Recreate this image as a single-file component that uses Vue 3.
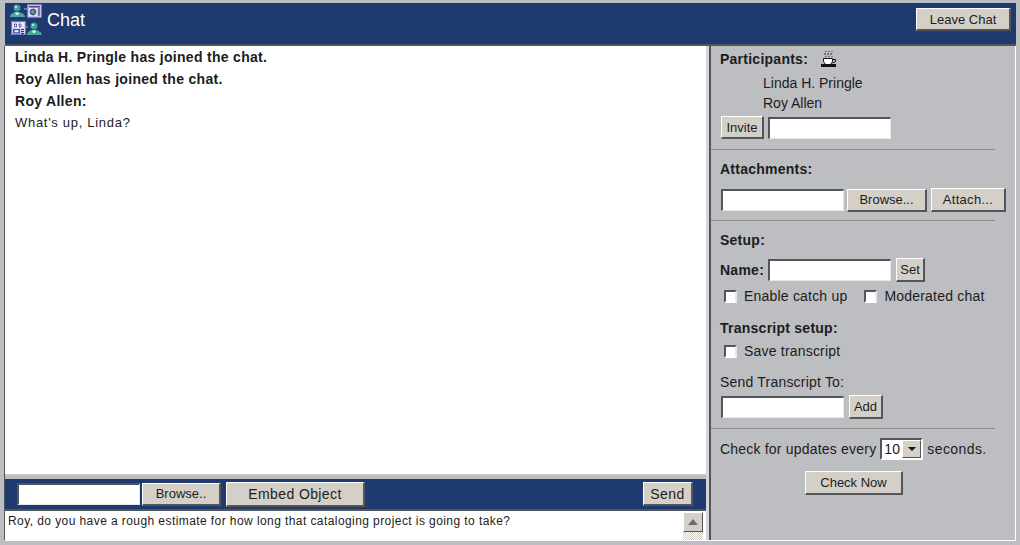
<template>
  <div class="frame">
    <header class="topbar">
      <div class="brand">
        <svg class="logo" width="34" height="34" viewBox="0 0 34 34">
          <rect x="17.500" y="0.500" width="14" height="13" fill="#c8c4e8" stroke="#7c78b8" />
          <rect x="19" y="2" width="11" height="1.500" fill="#484890" />
          <rect x="19" y="4" width="8" height="8" fill="#eef0f8" />
          <circle cx="23" cy="8" r="3.400" fill="#2a6cb0" />
          <path d="M21.500 6.500h3l-1 2.500h-2zM24 9l1.600-.6-.8 2.200z" fill="#d88a28" />
          <path d="M28 5h2M28 7h2M28 9h2M28 11h2" stroke="#303060" />
          <circle cx="7" cy="4" r="3.400" fill="#3ca0a0" />
          <circle cx="6" cy="3" r="1.300" fill="#a8e4e0" />
          <path d="M0 13c0-3 3-5 7-5s8 2 8 5z" fill="#48a8a0" />
          <path d="M5 8.500h4l-1 2.500H6z" fill="#d8f4f0" />
          <path d="M14 5h3" stroke="#a8b0d8" />
          <rect x="1.500" y="17.500" width="14" height="13" fill="#d4d0ee" stroke="#7c78b8" />
          <rect x="3" y="19" width="11" height="5" fill="#f4f4fc" />
          <path d="M4.500 20v3h2v-3zM9 20v3h2v-3z" fill="none" stroke="#404080" stroke-width=".8" />
          <rect x="3" y="25" width="7" height="4.500" fill="#3a58b8" />
          <rect x="4.500" y="26.200" width="4" height="2" fill="#f0f0f8" />
          <path d="M11 25.500h3M11 27.500h3M11 29.500h3" stroke="#303060" />
          <path d="M16 23h2" stroke="#a8b0d8" />
          <circle cx="24" cy="22" r="3.400" fill="#3ca0a0" />
          <circle cx="23" cy="21" r="1.300" fill="#a8e4e0" />
          <path d="M17 31c0-3 3-5 7-5s8 2 8 5z" fill="#48a8a0" />
          <path d="M22 26.500h4l-1 2.500h-2z" fill="#d8f4f0" />
        </svg>
        <span class="title">Chat</span>
      </div>
      <button class="btn leave">Leave Chat</button>
    </header>

    <div class="content">
      <main class="chat">
        <div class="log">
          <p class="strong">Linda H. Pringle has joined the chat.</p>
          <p class="strong">Roy Allen has joined the chat.</p>
          <p class="strong">Roy Allen:</p>
          <p class="said">What's up, Linda?</p>
        </div>
        <div class="composer-bar">
          <input class="field field-small" type="text" />
          <button class="btn browse-small">Browse..</button>
          <button class="btn embed">Embed Object</button>
          <button class="btn send">Send</button>
        </div>
        <div class="composer">
          <span class="draft">{{ draft }}</span>
          <div class="scroll">
            <div class="scroll-btn"><i class="up"></i></div>
            <div class="scroll-track"></div>
          </div>
        </div>
      </main>

      <aside class="side">
        <section class="block participants">
          <div class="head-row">
            <b class="label">Participants:</b>
            <svg class="cup" width="18" height="17" viewBox="0 0 18 17">
              <path d="M6 0v1M5 2v2M6 5v1M9 0v1M8 2v2M9 5v1M12 0v1M11 2v2M12 5v1" stroke="#333" fill="none" />
              <path d="M3.500 7.500h9v3l-2 3h-5l-2-3z" fill="#fff" stroke="#111" />
              <path d="M13 8.500h2.500v2l-3 1.500" fill="none" stroke="#111" />
              <rect x="1" y="13" width="15" height="3" fill="#111" />
            </svg>
          </div>
          <div v-for="name in participants" :key="name" class="person">{{ name }}</div>
          <div class="row invite-row">
            <button class="btn invite">Invite</button>
            <input class="field" type="text" />
          </div>
        </section>

        <section class="block attachments">
          <b class="label">Attachments:</b>
          <div class="row attach-row">
            <input class="field" type="text" />
            <button class="btn browse">Browse...</button>
            <button class="btn attach">Attach...</button>
          </div>
        </section>

        <section class="block setup">
          <b class="label">Setup:</b>
          <div class="row name-row">
            <b class="label">Name:</b>
            <input class="field" type="text" />
            <button class="btn set">Set</button>
          </div>
          <div class="row checks">
            <label class="check"><input type="checkbox" />Enable catch up</label>
            <label class="check"><input type="checkbox" />Moderated chat</label>
          </div>
          <b class="label transcript">Transcript setup:</b>
          <div class="row checks save">
            <label class="check"><input type="checkbox" />Save transcript</label>
          </div>
          <div class="plain send-to">Send Transcript To:</div>
          <div class="row add-row">
            <input class="field" type="text" />
            <button class="btn add">Add</button>
          </div>
        </section>

        <section class="block updates">
          <div class="update-row">
            <span class="plain">Check for updates every</span>
            <div class="select"><span>10</span><div class="select-btn"><i class="down"></i></div></div>
            <span class="plain seconds">seconds.</span>
          </div>
          <button class="btn check-now">Check Now</button>
        </section>
      </aside>
    </div>
  </div>
</template>

<script setup>
const participants = ['Linda H. Pringle', 'Roy Allen']
const draft = 'Roy, do you have a rough estimate for how long that cataloging project is going to take?'
</script>

<style>
html,
body {
  margin: 0;
  background: #bcbec2;
}
</style>

<style scoped>
.frame {
  width: 1020px;
  height: 545px;
  box-sizing: border-box;
  padding: 3px 4px 4px 5px;
  display: flex;
  flex-direction: column;
  background: #bcbec2;
  font-family: "Liberation Sans", Arial, sans-serif;
  font-size: 14px;
  color: #1c1c1c;
  overflow: hidden;
}

.topbar {
  height: 43px;
  box-sizing: border-box;
  flex: none;
  background: #1f3a6e;
  border-bottom: 2px solid #50565c;
  display: flex;
  align-items: flex-start;
  justify-content: space-between;
  padding-right: 5px;
}

.brand {
  display: flex;
  align-items: flex-start;
  padding: 1px 0 0 5px;
}

.logo {
  display: block;
}

.title {
  margin: 5px 0 0 3px;
  color: #fff;
  font-size: 18px;
  line-height: 22px;
}

.content {
  flex: 1;
  display: flex;
  min-height: 0;
  border-right: 1px solid #fff;
  border-bottom: 1px solid #fff;
}

.chat {
  width: 701px;
  flex: none;
  display: flex;
  flex-direction: column;
  background: #fff;
  box-shadow: -1px 0 0 #50565c;
}

.log {
  flex: 1;
  padding-left: 10px;
  background: #fff;
  border-bottom: 1px solid #d0cec4;
}

.log p {
  margin: 0;
  height: 22px;
  line-height: 22px;
}

.strong {
  font-weight: bold;
  letter-spacing: 0.3px;
}

.said {
  font-size: 13px;
  letter-spacing: 0.7px;
}

.composer-bar {
  height: 30px;
  flex: none;
  background: #1f3a6e;
  border-top: 4px solid #bcbec2;
  border-bottom: 2px solid #50565c;
  display: flex;
  align-items: center;
  padding: 0 13px 0 12px;
}

.composer {
  height: 29px;
  flex: none;
  display: flex;
  justify-content: space-between;
  padding-left: 3px;
}

.draft {
  font-size: 12px;
  letter-spacing: 0.42px;
  line-height: 20px;
}

.scroll {
  width: 20px;
  margin: 1px 3px 0 0;
  display: flex;
  flex-direction: column;
}

.scroll-btn {
  height: 20px;
  background: #d4d0c8;
  border: 1px solid;
  border-color: #fff #50565c #50565c #fff;
  box-sizing: border-box;
  display: flex;
  align-items: center;
  justify-content: center;
}

.up {
  border: 5px solid transparent;
  border-top: 0;
  border-bottom: 6px solid #6a6c70;
}

.scroll-track {
  flex: 1;
  background: repeating-conic-gradient(#d4d0c8 0 25%, #fff 0 50%) 0 0 / 2px 2px;
}

.side {
  flex: 1;
  background: #bcbec2;
  border-left: 2px solid #50565c;
  margin-left: 3px;
  box-shadow: -3px 0 0 #d4d6d8;
  display: flex;
  flex-direction: column;
}

.block {
  box-sizing: border-box;
  padding-left: 9px;
  border-bottom: 1px solid #8c8c88;
  margin-right: 20px;
}

.block .row {
  margin-left: 1px;
  margin-right: -20px;
}

.row {
  display: flex;
  align-items: center;
}

.label {
  font-weight: bold;
  letter-spacing: 0.25px;
  line-height: 16px;
}

.plain {
  letter-spacing: 0.2px;
  line-height: 16px;
}

.seconds {
  letter-spacing: 0.4px;
}

.head-row {
  display: flex;
  align-items: center;
  height: 26px;
}

.cup {
  margin-left: 12px;
  margin-top: 1px;
}

.person {
  margin-left: 43px;
  height: 20px;
  line-height: 20px;
}

.head-row + .person {
  margin-top: 1px;
}

.participants {
  height: 104px;
}

.invite-row {
  margin-top: 3px;
}

.invite {
  width: 43px;
  height: 23px;
  margin-right: 4px;
  font-size: 12px;
}

.attachments {
  height: 71px;
  padding-top: 11px;
}

.attachments .label {
  display: block;
}

.attach-row {
  margin-top: 11px;
  height: 24px;
}

.browse {
  width: 80px;
  height: 23px;
  margin-left: 3px;
}

.attach {
  width: 75px;
  height: 24px;
  margin-left: 4px;
  letter-spacing: 0.3px;
}

.setup {
  height: 208px;
  padding-top: 11px;
}

.setup > .label {
  display: block;
}

.name-row {
  margin-top: 10px;
  height: 24px;
  margin-left: 0 !important;
}

.name-row .label {
  margin-right: 4px;
}

.set {
  width: 29px;
  height: 24px;
  margin-left: 5px;
  font-size: 12px;
}

.checks {
  margin-top: 3px;
  margin-left: 4px !important;
  height: 22px;
}

.check {
  display: flex;
  align-items: center;
  margin-right: 17px;
  letter-spacing: 0.2px;
}

.check input {
  appearance: none;
  width: 13px;
  height: 13px;
  margin: 0 7px 0 0;
  box-sizing: border-box;
  background: #fff;
  border: 2px solid;
  border-color: #50565c #e8e8e8 #fff #50565c;
}

.transcript {
  margin-top: 13px;
}

.save {
  margin-top: 4px;
}

.send-to {
  margin-top: 12px;
}

.add-row {
  margin-top: 5px;
  height: 24px;
}

.add {
  width: 34px;
  height: 24px;
  margin-left: 5px;
  font-size: 12px;
}

.updates {
  border-bottom: 0;
  margin-right: 0;
  padding-top: 9px;
}

.update-row {
  display: flex;
  align-items: center;
  gap: 4px;
  height: 22px;
}

.select {
  width: 43px;
  height: 22px;
  box-sizing: border-box;
  background: #fff;
  border: 2px solid;
  border-color: #50565c #fff #fff #50565c;
  display: flex;
  align-items: center;
  justify-content: space-between;
  font-size: 14px;
  padding-left: 2px;
}

.select-btn {
  width: 19px;
  height: 18px;
  box-sizing: border-box;
  background: #d4d0c8;
  border: 1px solid;
  border-color: #fff #50565c #50565c #fff;
  display: flex;
  align-items: center;
  justify-content: center;
}

.down {
  border: 4px solid transparent;
  border-bottom: 0;
  border-top: 4px solid #111;
}

.check-now {
  display: block;
  width: 98px;
  height: 24px;
  margin: 11px 0 0 85px;
}

.btn {
  box-sizing: border-box;
  padding: 0;
  background: #d4d0c8;
  border: 1px solid;
  border-color: #fff #50565c #50565c #fff;
  border-width: 1px 2px 2px 1px;
  color: #1c1c1c;
  font: 13px "Liberation Sans", Arial, sans-serif;
}

.field {
  width: 123px;
  height: 22px;
  box-sizing: border-box;
  padding: 0;
  background: #fff;
  border: 2px solid;
  border-color: #50565c #e8e8e8 #e8e8e8 #50565c;
  border-width: 2px 1px 1px 2px;
  outline: none;
}

.leave {
  width: 95px;
  height: 23px;
  margin-top: 5px;
}

.field-small {
  width: 123px;
  margin-right: 2px;
}

.browse-small {
  width: 79px;
  height: 23px;
}

.embed {
  width: 139px;
  height: 25px;
  margin-left: 5px;
  font-size: 14px;
  letter-spacing: 0.4px;
}

.send {
  width: 50px;
  height: 24px;
  margin-left: auto;
  font-size: 14px;
  letter-spacing: 0.4px;
}
</style>
